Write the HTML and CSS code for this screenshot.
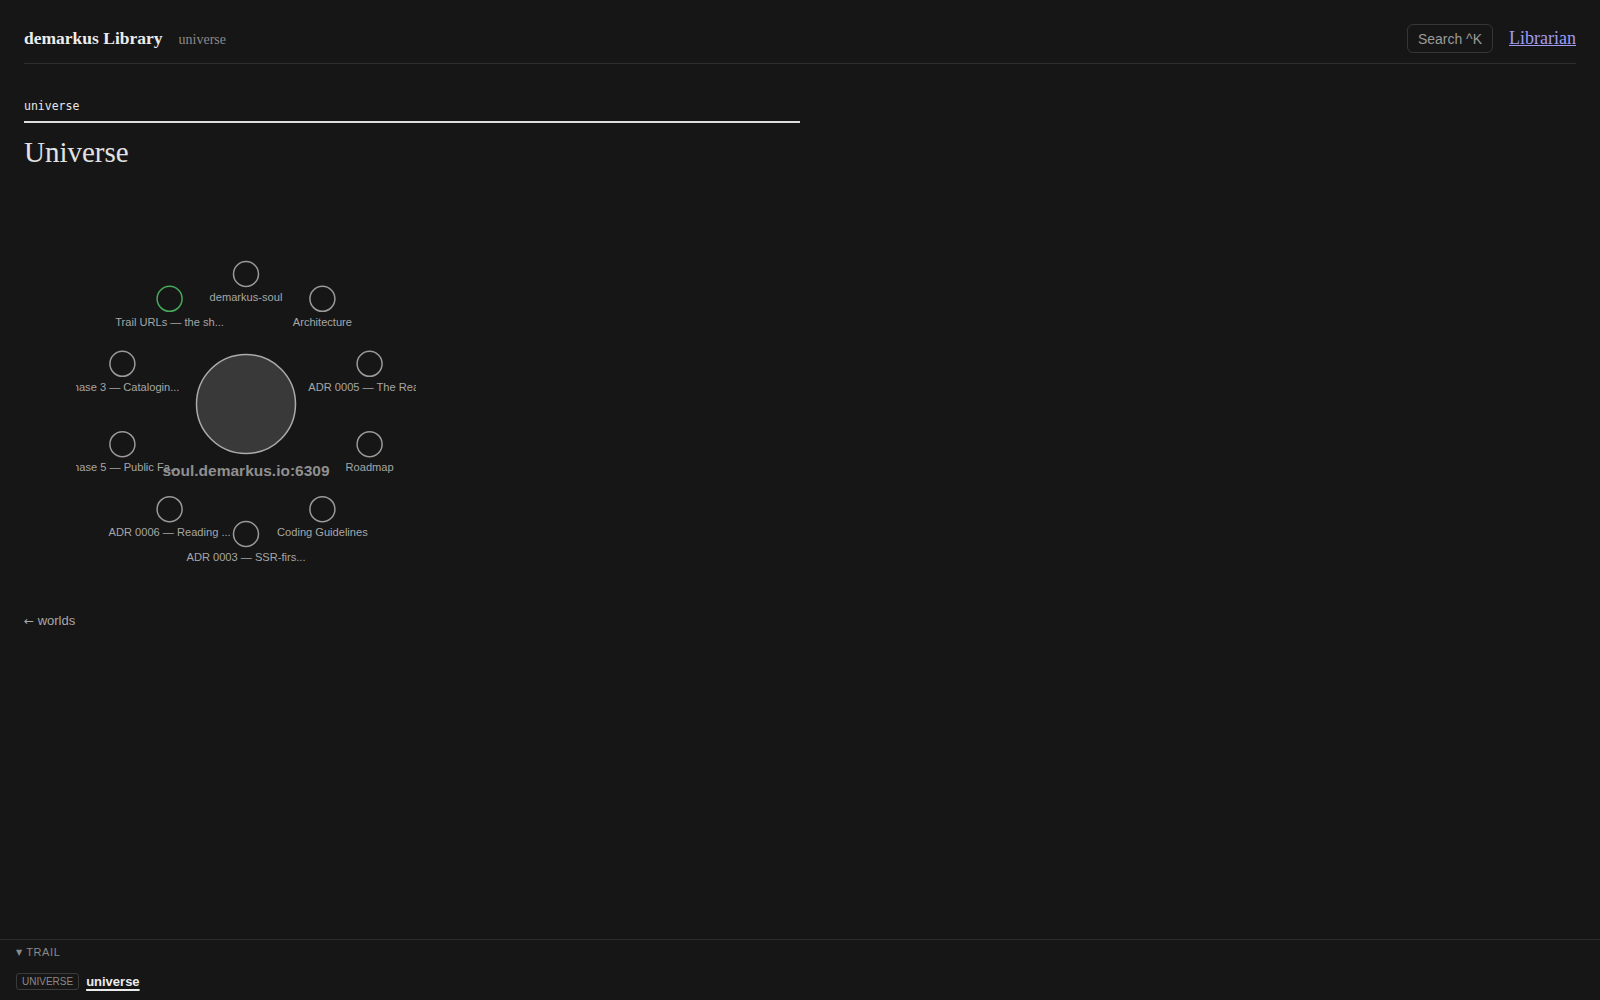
FILE: index.html
```html
<html>
<head>
	<title>Universe · demarkus Library</title>
	<link rel="stylesheet" href="styles.css">
</head>
<body>
	<div class="page">
		<header class="topbar">
			<div class="brand">
				<a href="#" class="site-title">demarkus Library</a>
				<span class="site-sub">universe</span>
			</div>
			<div class="actions">
				<button class="search">Search ^K</button>
				<a href="#" class="librarian">Librarian</a>
			</div>
		</header>

		<main class="content">
			<div class="crumb">universe</div>
			<h1 class="title">Universe</h1>

			<!-- world graph: hub in the middle, documents on a ring of r=130 -->
			<svg class="graph" width="340" height="340" viewBox="0 0 340 340">
				<circle class="node" cx="170" cy="40" r="12.5"/>
				<text class="label" x="170" y="67">demarkus-soul</text>

				<circle class="node" cx="246.4" cy="64.8" r="12.5"/>
				<text class="label" x="246.4" y="92">Architecture</text>

				<circle class="node" cx="293.6" cy="129.8" r="12.5"/>
				<text class="label" x="293.6" y="157">ADR 0005 — The Real...</text>

				<circle class="node" cx="293.6" cy="210.2" r="12.5"/>
				<text class="label" x="293.6" y="237">Roadmap</text>

				<circle class="node" cx="246.4" cy="275.2" r="12.5"/>
				<text class="label" x="246.4" y="302">Coding Guidelines</text>

				<circle class="node" cx="170" cy="300" r="12.5"/>
				<text class="label" x="170" y="327">ADR 0003 — SSR-firs...</text>

				<text class="label" x="93.6" y="302">ADR 0006 — Reading ...</text>
				<circle class="node" cx="93.6" cy="275.2" r="12.5"/>

				<circle class="node" cx="46.4" cy="210.2" r="12.5"/>
				<text class="label" x="46.4" y="237">Phase 5 — Public Fa...</text>

				<circle class="node" cx="46.4" cy="129.8" r="12.5"/>
				<text class="label" x="46.4" y="157">Phase 3 — Catalogin...</text>

				<circle class="node visited" cx="93.6" cy="64.8" r="12.5"/>
				<text class="label" x="93.6" y="92">Trail URLs — the sh...</text>

				<circle class="hub" cx="170" cy="170" r="49.5"/>
				<text class="hub-label" x="170" y="242">soul.demarkus.io:6309</text>
			</svg>

			<p class="back-row"><a href="#" class="back"><span class="back-arrow">←</span> worlds</a></p>
		</main>
	</div>

	<footer class="trail">
		<div class="trail-head"><span class="caret">▼</span> Trail</div>
		<div class="trail-row">
			<span class="badge">universe</span>
			<a href="#" class="trail-current">universe</a>
		</div>
	</footer>
</body>
</html>
```

FILE: styles.css
```css
body{
	margin: 0;
	min-height: 100vh;
	display: flex;
	flex-direction: column;
	background: #161616;
	color: #e6e6e6;
	font-family: "Liberation Sans", Arial, sans-serif;
}

.page{
	padding: 0 24px;
}

/* top bar */
.topbar{
	display: flex;
	align-items: center;
	justify-content: space-between;
	padding: 24px 0 10px;
	border-bottom: 1px solid #2e2e2e;
}

.brand{
	display: flex;
	align-items: baseline;
	gap: 16px;
	font-family: "Liberation Serif", "Times New Roman", serif;
}

.site-title{
	font-size: 17.5px;
	font-weight: bold;
	color: #ececec;
	text-decoration: none;
}

.site-sub{
	font-size: 14px;
	color: #8a8a8a;
}

.actions{
	display: flex;
	align-items: center;
	gap: 16px;
}

.search{
	height: 29px;
	padding: 0 10px;
	border: 1px solid #363636;
	border-radius: 6px;
	background: transparent;
	color: #9a9a9a;
	font-family: "Liberation Sans", Arial, sans-serif;
	font-size: 14px;
	cursor: pointer;
}

.librarian{
	font-family: "Liberation Serif", "Times New Roman", serif;
	font-size: 18px;
	color: #a19cf2;
	text-decoration: underline;
}

/* page body */
.content{
	padding-top: 35px;
}

.crumb{
	width: 50%;
	padding-bottom: 8px;
	border-bottom: 2px solid #dedede;
	font-family: "DejaVu Sans Mono", monospace;
	font-size: 11.5px;
	line-height: 14px;
	color: #e6e6e6;
}

.title{
	margin: 13px 0 0;
	font-family: "Liberation Serif", "Times New Roman", serif;
	font-size: 29px;
	font-weight: normal;
	line-height: 33px;
	color: #e2e2e2;
}

.graph{
	display: block;
	margin: 65px 0 0 52px;
}

.node{
	fill: #161616;
	stroke: #9a9a9a;
	stroke-width: 1.5;
}

.node.visited{
	stroke: #47a95a;
}

.hub{
	fill: #393939;
	stroke: #ababab;
	stroke-width: 1.5;
}

.label{
	fill: #a6a6a6;
	font-family: "Liberation Sans", Arial, sans-serif;
	font-size: 11.1px;
	text-anchor: middle;
}

.hub-label{
	fill: #8f8f8f;
	font-family: "Liberation Sans", Arial, sans-serif;
	font-size: 15.5px;
	font-weight: bold;
	text-anchor: middle;
}

.back-row{
	margin: 39px 0 0;
	line-height: 15px;
}

.back{
	font-size: 13px;
	color: #a8a8a8;
	text-decoration: none;
}

.back-arrow{
	font-family: "DejaVu Sans", sans-serif;
	font-size: 12px;
}

/* trail bar at the bottom */
.trail{
	margin-top: auto;
	padding: 5px 16px 10px;
	border-top: 1px solid #2c2c2c;
}

.trail-head{
	font-size: 11px;
	line-height: 14px;
	letter-spacing: 0.6px;
	text-transform: uppercase;
	color: #8a8a8a;
}

.caret{
	font-family: "DejaVu Sans", sans-serif;
	font-size: 8px;
	vertical-align: 1px;
}

.trail-row{
	display: flex;
	align-items: center;
	gap: 7px;
	margin-top: 13px;
}

.badge{
	height: 15px;
	padding: 0 5px;
	border: 1px solid #3a3a3a;
	border-radius: 3px;
	font-size: 10px;
	line-height: 15px;
	text-transform: uppercase;
	color: #8a8a8a;
}

.trail-current{
	font-size: 13px;
	font-weight: bold;
	color: #ececec;
	text-decoration: underline;
	text-decoration-thickness: 2px;
	text-underline-offset: 3px;
}
```
